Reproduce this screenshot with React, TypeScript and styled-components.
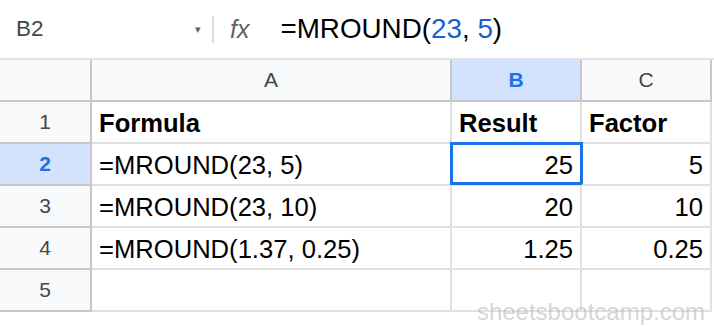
import React from 'react';
import styled, { createGlobalStyle, css } from 'styled-components';

const rows = [
  { formula: '=MROUND(23, 5)', result: '25', factor: '5' },
  { formula: '=MROUND(23, 10)', result: '20', factor: '10' },
  { formula: '=MROUND(1.37, 0.25)', result: '1.25', factor: '0.25' },
  { formula: '', result: '', factor: '' },
];

function App() {
  return (
    <Page>
      <GlobalStyle />
      <FormulaBar>
        <NameBox>
          B2
          <Caret>▾</Caret>
        </NameBox>
        <Divider />
        <FxLabel>fx</FxLabel>
        <FormulaText>
          =MROUND(<Ref>23</Ref>, <Ref>5</Ref>)
        </FormulaText>
      </FormulaBar>

      <Grid>
        <HeaderCell />
        <HeaderCell>A</HeaderCell>
        <HeaderCell $selected>B</HeaderCell>
        <HeaderCell>C</HeaderCell>

        <HeaderCell>1</HeaderCell>
        <Cell $bold>Formula</Cell>
        <Cell $bold>Result</Cell>
        <Cell $bold>Factor</Cell>

        {rows.map((row, i) => (
          <React.Fragment key={i}>
            <HeaderCell $selected={i === 0}>{i + 2}</HeaderCell>
            <Cell>{row.formula}</Cell>
            <Cell $right $active={i === 0}>{row.result}</Cell>
            <Cell $right>{row.factor}</Cell>
          </React.Fragment>
        ))}
      </Grid>

      <Watermark>sheetsbootcamp.com</Watermark>
    </Page>
  );
}

const GlobalStyle = createGlobalStyle`
  body {
    margin: 0;
    background: #ffffff;
    font-family: "Liberation Sans", Arial, sans-serif;
  }
`;

const Page = styled.div`
  position: relative;
  width: 714px;
  height: 326px;
  overflow: hidden;
  background: #ffffff;
`;

const FormulaBar = styled.div`
  display: flex;
  align-items: center;
  height: 58px;
  border-bottom: 2px solid #e3e3e3;
`;

const NameBox = styled.div`
  display: flex;
  align-items: center;
  justify-content: space-between;
  width: 212px;
  box-sizing: border-box;
  padding: 0 11px 0 16px;
  font-size: 22.5px;
  color: #444746;
`;

const Caret = styled.span`
  font-size: 11px;
  color: #5f6368;
`;

const Divider = styled.div`
  width: 2px;
  height: 27px;
  background: #dadce0;
`;

const FxLabel = styled.div`
  margin-left: 16px;
  font-size: 25px;
  font-style: italic;
  color: #5f6368;
`;

const FormulaText = styled.div`
  margin-left: 31px;
  font-size: 27.8px;
  color: #000000;
`;

const Ref = styled.span`
  color: #1a5fcf;
`;

const Grid = styled.div`
  display: grid;
  grid-template-columns: 92px 360px 130px 130px;
  grid-auto-rows: 42px;
`;

const HeaderCell = styled.div<{ $selected?: boolean }>`
  display: flex;
  align-items: center;
  justify-content: center;
  box-sizing: border-box;
  border-right: 2px solid #c7c7c7;
  border-bottom: 2px solid #c7c7c7;
  background: #f8f9fa;
  font-size: 21px;
  color: #444746;
  ${({ $selected }) =>
    $selected &&
    css`
      background: #d3e3fd;
      color: #1a73e8;
      font-weight: bold;
    `}
`;

const Cell = styled.div<{ $right?: boolean; $bold?: boolean; $active?: boolean }>`
  position: relative;
  display: flex;
  align-items: center;
  justify-content: ${({ $right }) => ($right ? 'flex-end' : 'flex-start')};
  box-sizing: border-box;
  padding: 3px 7px 0;
  border-right: 2px solid #e1e1e1;
  border-bottom: 2px solid #e1e1e1;
  font-size: 25.6px;
  font-weight: ${({ $bold }) => ($bold ? 'bold' : 'normal')};
  color: #000000;
  ${({ $active }) =>
    $active &&
    css`
      &::after {
        content: '';
        position: absolute;
        top: -2px;
        left: -2px;
        right: -3px;
        bottom: -1px;
        border: 3px solid #1a73e8;
      }
    `}
`;

const Watermark = styled.div`
  position: absolute;
  right: 9px;
  bottom: 0;
  font-size: 24px;
  color: rgba(185, 185, 185, 0.6);
  pointer-events: none;
`;

export default App;
